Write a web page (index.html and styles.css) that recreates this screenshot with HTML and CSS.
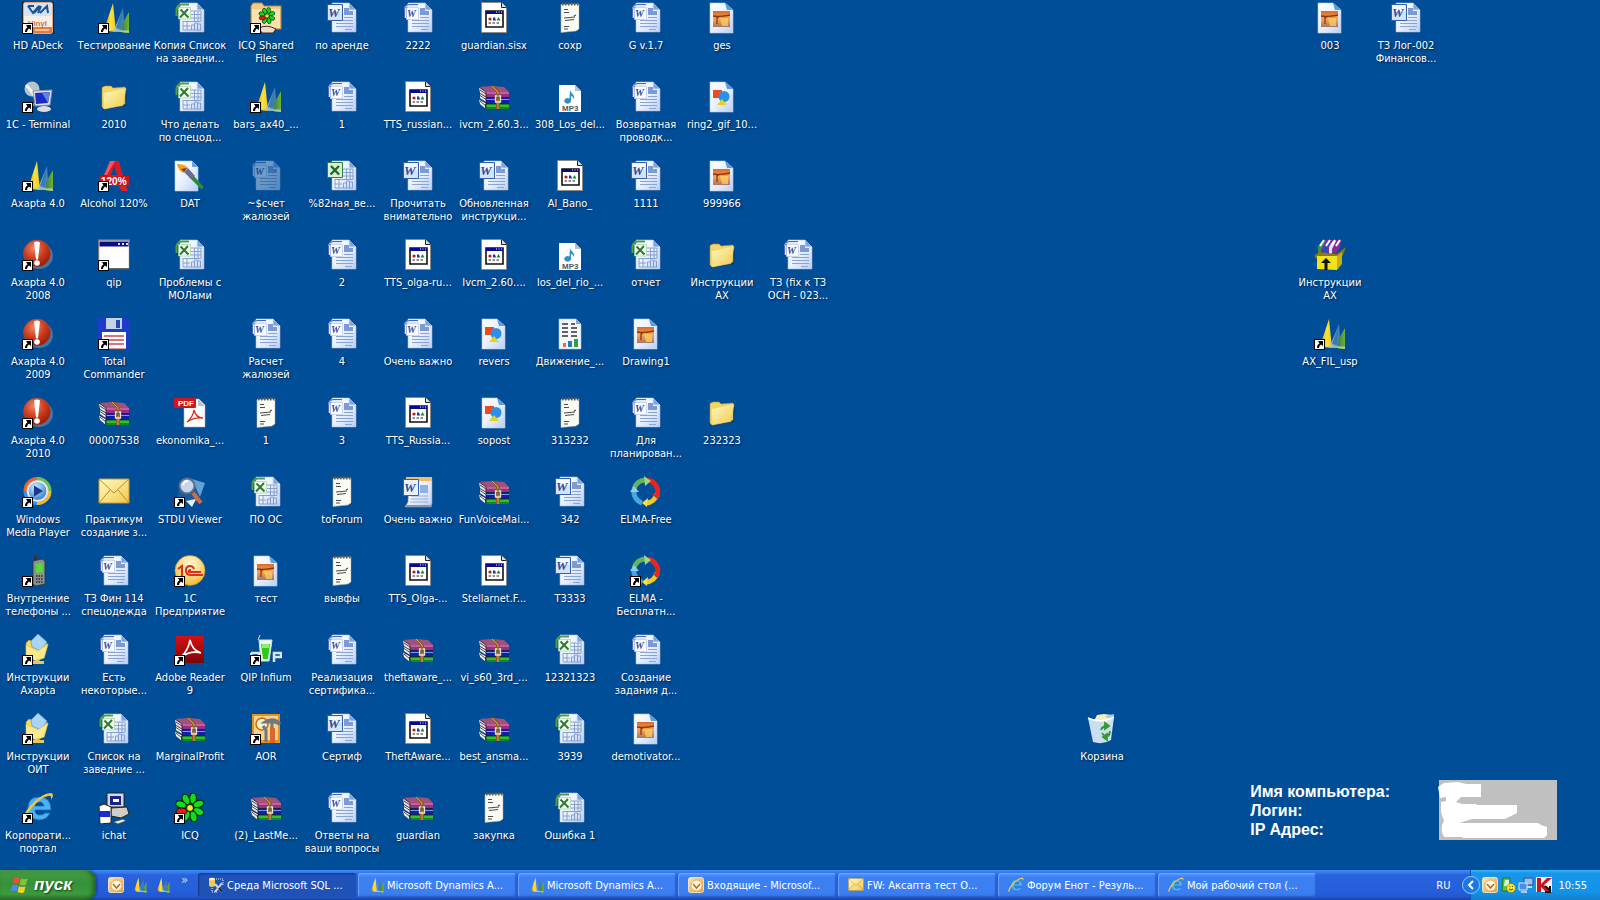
FILE: index.html
```html
<!DOCTYPE html>
<html lang="ru">
<head>
    <meta charset="UTF-8">
    <meta name="viewport" content="width=device-width, initial-scale=1.0">
    <title>Рабочий стол</title>
    <link rel="stylesheet" href="styles.css">
</head>
<body>
    <!-- Icon set -->
    <svg class="sprites" aria-hidden="true">
        <defs>
            <linearGradient id="g-page" x1="0" y1="0" x2="1" y2="1"><stop offset="0" stop-color="#fff"/><stop offset=".5" stop-color="#eaf1fd"/><stop offset="1" stop-color="#b9cff5"/></linearGradient>
            <linearGradient id="g-image" x1="0" y1="0" x2="0" y2="1"><stop offset="0" stop-color="#d9682c"/><stop offset=".5" stop-color="#f7a94e"/><stop offset="1" stop-color="#a87466"/></linearGradient>
            <linearGradient id="g-folder" x1="0" y1="0" x2="1" y2="1"><stop offset="0" stop-color="#fffbc2"/><stop offset="1" stop-color="#f0c94e"/></linearGradient>
            <linearGradient id="g-yellow" x1="0" y1="0" x2="1" y2="0"><stop offset="0" stop-color="#f08a1c"/><stop offset=".5" stop-color="#fde13a"/><stop offset="1" stop-color="#f3c92a"/></linearGradient>
            <linearGradient id="g-blue" x1="0" y1="0" x2="1" y2="0"><stop offset="0" stop-color="#a4cdea"/><stop offset="1" stop-color="#2f6cab"/></linearGradient>
            <linearGradient id="g-green" x1="0" y1="0" x2="1" y2="0"><stop offset="0" stop-color="#3f7f5a"/><stop offset="1" stop-color="#6fb52a"/></linearGradient>
            <radialGradient id="g-red" cx=".4" cy=".3" r=".75"><stop offset="0" stop-color="#f08a6a"/><stop offset=".5" stop-color="#cf3e1f"/><stop offset="1" stop-color="#8c1a08"/></radialGradient>
            <radialGradient id="g-gold" cx=".5" cy=".3" r=".8"><stop offset="0" stop-color="#fffbe0"/><stop offset="1" stop-color="#f3b21c"/></radialGradient>
            <radialGradient id="g-sky" cx=".4" cy=".3" r=".8"><stop offset="0" stop-color="#cfeaff"/><stop offset="1" stop-color="#1c74c8"/></radialGradient>
            <linearGradient id="g-adobe" x1="0" y1="0" x2="0" y2="1"><stop offset="0" stop-color="#d80f12"/><stop offset="1" stop-color="#7c0507"/></linearGradient>
            <linearGradient id="g-outlook" x1="0" y1="0" x2="1" y2="1"><stop offset="0" stop-color="#ffe3a8"/><stop offset="1" stop-color="#e89a3c"/></linearGradient>
        </defs>

        <symbol id="shortcut" viewBox="0 0 32 32">
            <path d="M0 21h11v11H0z" fill="#000"/><path d="M1 22h9v9H1z" fill="#fff"/>
            <path d="M4 23h5v5l-2-1.500-1.500 1.500-.5 2H3c0-2 .5-3.500 2.500-4.500z" fill="#000"/>
        </symbol>

        <symbol id="page" viewBox="0 0 32 32">
            <path d="M7 2h17l7 7v22H7z" fill="#022f63" opacity=".35"/>
            <path d="M6 1h17l7 7v22H6z" fill="url(#g-page)" stroke="#a9bfe6" stroke-width=".6"/>
            <path d="M23 1v7h7z" fill="#7fa5dc"/><path d="M23 1v7h7" fill="none" stroke="#dbe8fb" stroke-width=".8"/>
        </symbol>
        <symbol id="doc" viewBox="0 0 32 32">
            <use href="#page"/>
            <path d="M18 6h5v3h4v4h-9z" fill="#7d9bd2"/>
            <path d="M18 15.500h9M10 18.500h17M10 21.500h17M10 24.500h17M19 27.500h7" stroke="#8aa4d4" stroke-width="1"/>
        </symbol>
        <symbol id="sheet" viewBox="0 0 32 32">
            <use href="#page"/>
            <path d="M17 9h10v10M17 12.500h10M17 16h10M9 19.500h18M20.500 9v11M24 9v11M9 19v9M13 19v9M9 24h7M9 28h18M17.500 28v-5h3v5M20.500 28v-7h3v7M23.500 28v-6h3v6" fill="none" stroke="#7e9acb" stroke-width=".9"/>
        </symbol>
        <symbol id="word" viewBox="0 0 32 32">
            <use href="#doc"/>
            <path d="M16 2H7Q2 3 2 8v8h2V5h12z" fill="#dfe8f8"/>
            <path d="M16 2.500H7Q2.500 4 2.500 8v8" fill="none" stroke="#4a68b4"/>
            <path d="M4.500 5.500h12v12h-12z" fill="#fafcff" stroke="#b9c8e6" stroke-width=".7"/>
        </symbol>
        <symbol id="word-old" viewBox="0 0 32 32">
            <use href="#doc"/>
            <path d="M1.500 2.500h15v16h-15z" fill="#d4e2fa" stroke="#3360ae"/>
            <path d="M2.500 3.500h13v6h-13z" fill="#f4f8ff"/>
        </symbol>
        <symbol id="word-template" viewBox="0 0 32 32">
            <path d="M7 3h23v24l-1 4H3l3-5z" fill="url(#g-page)" stroke="#8d99a8" stroke-width=".6"/>
            <path d="M4 1h26v4H4z" fill="#f3bb68"/><path d="M3 29h26l1 2H4z" fill="#8a95a5"/>
            <path d="M18 9h8v8h-8z" fill="#8fb0e2"/><path d="M9 20h17M9 23h17M8 26h18" stroke="#9aaed2"/>
            <path d="M1.500 3.500h15v16h-15z" fill="#eaf1fd" stroke="#3360ae"/>
        </symbol>
        <symbol id="excel" viewBox="0 0 32 32">
            <use href="#sheet"/>
            <path d="M15 2.500H7Q2.500 4 2.500 8v6" fill="none" stroke="#4e9e4a" stroke-width="2"/>
            <path d="M4.500 5.500h12v11.500h-12z" fill="#f3fbf2" stroke="#a5cfa2" stroke-width=".7"/>
            <path d="M6.500 7.500l8 8M14 7L6 15.500" stroke="#2e7a34" stroke-width="2"/>
        </symbol>
        <symbol id="excel-old" viewBox="0 0 32 32">
            <use href="#sheet"/>
            <path d="M1.500 2.500h15v15h-15z" fill="#d9f0d6" stroke="#35803a"/>
            <path d="M5 6l8 8.500M13 6l-8.500 8.500" stroke="#1f6b27" stroke-width="2.400"/>
        </symbol>
        <symbol id="picture" viewBox="0 0 32 32">
            <path d="M4 1h15l8 7v23H4z" fill="url(#g-page)" stroke="#b5c9ea" stroke-width=".6"/>
            <path d="M19 1l8 7h-6z" fill="#5b9be0"/>
            <path d="M7 9h17v16H7z" fill="url(#g-image)"/><path d="M14 16h8v8h-6z" fill="#fbd465" opacity=".7"/>
            <path d="M7 14q8 1 17-1M11 14v8M11 16l3-2" fill="none" stroke="#8f3414" stroke-width="1.300"/>
        </symbol>
        <symbol id="shapes" viewBox="0 0 32 32">
            <path d="M4 1h15l8 7v23H4z" fill="url(#g-page)" stroke="#b5c9ea" stroke-width=".6"/>
            <path d="M19 1l8 7h-6z" fill="#5b9be0"/>
            <path d="M7 9h9v8H7z" fill="#f04a1c"/><circle cx="18" cy="15.500" r="5.500" fill="#2b90e8"/><path d="M16 18l5 6H11z" fill="#e6d21e"/>
        </symbol>
        <symbol id="note" viewBox="0 0 32 32">
            <path d="M8 3h18v25l-17 3z" fill="#02284f" opacity=".5"/>
            <path d="M7 2.500l18-.5v25l-3 2L7 30.500z" fill="#fbfbf6" stroke="#b3b3a4" stroke-width=".6"/>
            <path d="M8 2h17" stroke="#6a5c40" stroke-width="3" stroke-dasharray="1.500 1.500"/>
            <path d="M10 7.500h4M10 10.500h5M10 16l11-1M11 18.500l9-1M10 24.500h5M10 27h4M20 14l2-1" stroke="#4b4b4b" stroke-width="1.100"/>
        </symbol>
        <symbol id="program" viewBox="0 0 32 32">
            <path d="M3.500.5h20l5 5v25h-25z" fill="#fff" stroke="#8a8a8a"/><path d="M23.500.5v5h5" fill="#ddd" stroke="#222"/>
            <path d="M8 9h17v16H8z" fill="#fff" stroke="#111" stroke-width="1.600"/><path d="M8 9h17v3H8z" fill="#0a0a90"/>
            <path d="M18 10h1M20.500 10h1M23 10h1" stroke="#fff"/>
            <circle cx="12" cy="17" r="1.600" fill="#c01818"/><path d="M15 15.500h2l1 3h-3z" fill="#1c2cc8"/><path d="M20.500 15l2 3.500h-4z" fill="#168a28"/>
            <path d="M10.500 21h12" stroke="#222" stroke-dasharray="2.500 1.500"/>
        </symbol>
        <symbol id="rar" viewBox="0 0 32 32">
            <path d="M1 6l13-1 12 1 5 5H8z" fill="#a3507a"/><path d="M1 6l7 5v5l-6-4z" fill="#e9dfe6"/><path d="M8 11h23v5H8z" fill="#9a2f80"/><path d="M8 12h23" stroke="#e48fc8"/>
            <path d="M2 12l6 4v5l-6-4z" fill="#f2f2f2"/><path d="M8 17h23v5H8z" fill="#1420a4"/><path d="M8 18.500h23" stroke="#6a9cf8"/>
            <path d="M1 18l7 4v6l-6-5z" fill="#f2f2f2"/><path d="M7 23h24v5H7z" fill="#0f8a1e"/><path d="M8 25h23" stroke="#5ef048"/>
            <path d="M1 6l7 5v17M1 12l7 4M1 18l7 4M8 16.500h23M8 22.500h23M2 9l6 4M2 14.500l6 4M2 20l6 5" fill="none" stroke="#1b1b2c" stroke-width=".8"/>
            <path d="M13 5h4l5 6v17h-4V11z" fill="#8f5a26"/><path d="M14 5l6 6v17" fill="none" stroke="#d8a25c"/>
            <path d="M17.500 15h5v6h-5z" fill="none" stroke="#ece3c6" stroke-width="1.300"/><path d="M20 13v6" stroke="#444"/>
        </symbol>
        <symbol id="mp3" viewBox="0 0 32 32">
            <path d="M5 4h16l6 6v21H5z" fill="#fff"/><path d="M21 4v6h6z" fill="#b7c2cc"/>
            <path d="M16 9c1 4 5 4 4 9-1-2-2-3-3-3v5a3.400 2.800 0 1 1-1.500-2.500z" fill="#2e8fc8"/>
        </symbol>
        <symbol id="report" viewBox="0 0 32 32">
            <path d="M5 1h17l5 5v25H5z" fill="#f4f6fb" stroke="#b3bfd6" stroke-width=".6"/><path d="M22 1v5h5z" fill="#8fa3c4"/>
            <path d="M8 6h6M8 10h6M8 14h6M8 18h6M17 6h4M17 10h6M17 14h6M17 18h6" stroke="#333" stroke-width="1.600"/>
            <path d="M9 25h3v4H9z" fill="#f06a3c"/><path d="M14 23h4v6h-4z" fill="#2476c8"/><path d="M20 21h4v8h-4z" fill="#2ea04a"/>
        </symbol>
        <symbol id="folder" viewBox="0 0 32 32">
            <path d="M5 29l23-4 1-15-2 1z" fill="#02284f" opacity=".5"/>
            <path d="M4 6.500l3-1.500 6 0 2 2 12-1v17L6 28 4 26z" fill="#f3d568" stroke="#b88f2c" stroke-width=".6"/>
            <path d="M5 12l22-5 1 .5-3 17L6 28z" fill="url(#g-folder)" stroke="#e9c95a" stroke-width=".5"/>
        </symbol>
        <symbol id="sails" viewBox="0 0 32 32">
            <path d="M15 1L7 25l3 4 8 1z" fill="url(#g-yellow)"/>
            <path d="M25 6l-9 22 3 2h8z" fill="url(#g-blue)"/><path d="M25 6l-7 20 5 1z" fill="#3a78b8"/>
            <path d="M31 10l-7 12v9h7z" fill="url(#g-green)"/>
            <path d="M10 28l21 .5V31z" fill="#a9c9a4"/>
        </symbol>
        <symbol id="alert" viewBox="0 0 32 32">
            <ellipse cx="17" cy="17" rx="14" ry="13" fill="#8c9cb8" opacity=".5"/><circle cx="15" cy="14.500" r="13.500" fill="url(#g-red)" stroke="#a84f3c" stroke-width=".6"/>
            <path d="M12 3.500q3-2 6 0l-2 17h-2z" fill="#fff"/><circle cx="15" cy="24" r="2.800" fill="#fff"/>
        </symbol>
        <symbol id="adeck" viewBox="0 0 32 32">
            <path d="M0 0h32v32H0z" fill="#222"/><rect x="1.500" y=".5" width="29" height="31" rx="2" fill="#f4efe8" stroke="#e7a57c"/>
            <path d="M2 25h28v6H2z" fill="#ea7a3a"/><path d="M2 1h28v13H2z" fill="#d5e4f4"/>
            <path d="M6 4l5 7 6-7M12 11l6-7M19 4l-3 7M18 11l7-7 1 7M6 4h6" fill="none" stroke="#17529c" stroke-width="2"/>
            <path d="M13 28h14" stroke="#ffd9b4" stroke-width="1.500"/>
        </symbol>
        <symbol id="terminal" viewBox="0 0 32 32">
            <circle cx="10" cy="8" r="7.500" fill="#b9c3ca"/><path d="M4 4q6 6 8 11" stroke="#eef3f5" stroke-width="3" fill="none"/>
            <path d="M11 10l19-1-2 15-15 1z" fill="#dfe3ea" stroke="#8790a0"/><path d="M13 12l15-1-2 11-12 1z" fill="#1a2cc4"/><path d="M20 12l8-1-2 11z" fill="#5b84e8"/>
            <ellipse cx="22" cy="28" rx="7" ry="3" fill="#d9dce2"/><path d="M12 22l-2 5" stroke="#9aa"/>
        </symbol>
        <symbol id="alcohol" viewBox="0 0 32 32">
            <path d="M12 1h9l8 29h-7l-2-7h-8l-7 6z" fill="#d41c24"/><path d="M16 6l3 9h-6z" fill="#004e98"/><path d="M12 1h5L9 15H6z" fill="#ee5a60"/>
            <path d="M1 16h30v10H1z" fill="#c9151f"/><path d="M23 26h5l2 5h-6z" fill="#e02028"/>
        </symbol>
        <symbol id="window" viewBox="0 0 32 32">
            <path d="M.500 1h31v29H.5z" fill="#fff" stroke="#77797d" stroke-width="1.400"/><path d="M1.500 2.500h29v5h-29z" fill="#0b0b8e"/>
            <path d="M20 4h2v2h-2zM24 4h2v2h-2zM28 4h2v2h-2z" fill="#e4e4e4"/><path d="M2 30h30V3" fill="none" stroke="#333"/>
        </symbol>
        <symbol id="floppy" viewBox="0 0 32 32">
            <path d="M0 0h32v32H2l-2-2z" fill="#1d3ccc"/><path d="M8 0h16v11H8z" fill="#c4d2e4"/><path d="M18 2h4v8h-4z" fill="#2447b8"/>
            <path d="M4 14h24v17H4z" fill="#fff"/><path d="M6 18h20M6 22h20M6 26h20" stroke="#c84a54" stroke-width="1.300"/><path d="M4 31h24" stroke="#c0262c"/>
        </symbol>
        <symbol id="mail" viewBox="0 0 32 32">
            <path d="M1 3h30v24H1z" fill="url(#g-folder)" stroke="#c79432"/><path d="M1 3l15 14L31 3M1 27l11-13M31 27L20 14" fill="none" stroke="#c08a2c"/>
        </symbol>
        <symbol id="brush" viewBox="0 0 32 32">
            <path d="M1 1h17l6 6v24H1z" fill="url(#g-page)" stroke="#b5c9ea" stroke-width=".6"/><path d="M18 1l6 6h-6z" fill="#6d9fd8"/>
            <path d="M15 17l3-3 11 12q1 3-2 3z" fill="#2e8a34"/><path d="M10 12l4-4 7 8-4 3z" fill="#6c6c9a"/><path d="M3 4q8 0 11 4l-5 5Q4 10 3 4z" fill="#f0a024"/><path d="M7 9l6-1-3 4z" fill="#7c3c08"/>
        </symbol>
        <symbol id="pdf" viewBox="0 0 32 32">
            <path d="M10 2h15l6 6v22H10z" fill="#fff" stroke="#aab" stroke-width=".6"/><path d="M24 2v7h7z" fill="#b9c3cf"/>
            <path d="M13 25q6-5 7-12 2 8 9 8-9-1-16 4z" fill="none" stroke="#e0261f" stroke-width="1.300"/>
            <rect y="1" width="22" height="10" rx="1" fill="#d3141c"/>
        </symbol>
        <symbol id="loupe" viewBox="0 0 32 32">
            <path d="M8 5l23 2-9 20-20-4z" fill="#1d5c9a"/><path d="M18 3l13 4-5 14z" fill="#5fa3d8"/><path d="M12 25l6 6 4-8z" fill="#e8f1fa"/>
            <path d="M19 17l8 10" stroke="#d8693a" stroke-width="4"/><circle cx="13" cy="10" r="7.500" fill="#c8d6ea" stroke="#5c6e8c" stroke-width="2"/><path d="M9 9q1-4 5-4" stroke="#fff" stroke-width="2" fill="none"/>
        </symbol>
        <symbol id="onec" viewBox="0 0 32 32">
            <circle cx="16" cy="15.500" r="15" fill="url(#g-gold)" stroke="#d88f14" stroke-width=".6"/>
            <path d="M4 14l4-3v10M20 14q-1-3-4-3-4 0-4 4.500t5 4.500h12M17 15q-3 0-2 2h12" fill="none" stroke="#d6321c" stroke-width="2"/>
        </symbol>
        <symbol id="reader" viewBox="0 0 32 32">
            <path d="M2 2h28v27H2z" fill="url(#g-adobe)"/><path d="M7 23q7-6 9-17 2 10 11 13-10-3-20 4z" fill="none" stroke="#fff" stroke-width="1.600"/>
        </symbol>
        <symbol id="flower" viewBox="0 0 32 32">
            <g fill="#12dc1c" stroke="#062c06" stroke-width="1.200">
                <ellipse cx="19" cy="6.500" rx="3.500" ry="5.500"/><ellipse cx="12" cy="7.500" rx="3.500" ry="5.500" transform="rotate(-25 12 7.500)"/>
                <ellipse cx="24.500" cy="12" rx="5.500" ry="3.500" transform="rotate(-20 24.500 12)"/><ellipse cx="24.500" cy="19.500" rx="5.500" ry="3.500" transform="rotate(25 24.500 19.500)"/>
                <ellipse cx="19.500" cy="24.500" rx="3.500" ry="5.500" transform="rotate(-15 19.500 24.500)"/><ellipse cx="12" cy="24" rx="3.500" ry="5.500" transform="rotate(25 12 24)"/>
                <ellipse cx="7" cy="12.500" rx="5.500" ry="3.500" transform="rotate(20 7 12.500)"/>
            </g>
            <ellipse cx="7.500" cy="19.500" rx="5.500" ry="3.500" fill="#e01c1c" stroke="#2a0606"/><circle cx="16" cy="16" r="3.500" fill="#f6ec2a" stroke="#111"/>
        </symbol>
        <symbol id="flower-folder" viewBox="0 0 32 32">
            <path d="M1 4l2-3h9l2 3h17v23H1z" fill="#f3cc84" stroke="#b98a3e"/><path d="M2 7h28v19H2z" fill="#fbe2ae"/>
            <svg x="8" y="5" width="18" height="18" viewBox="0 0 32 32"><use href="#flower"/></svg>
            <path d="M9 26q8-4 17 1l-3 4H12z" fill="#f2d9c4" stroke="#422"/>
        </symbol>
        <symbol id="player" viewBox="0 0 32 32">
            <circle cx="15.500" cy="15" r="13.500" fill="#cfd8e6"/>
            <g fill="none" stroke-width="3"><path d="M3 15A12.500 12.500 0 0 1 15 2.500" stroke="#f0622a"/><path d="M15 2.500A12.500 12.500 0 0 1 28 15" stroke="#6fc04a"/><path d="M28 15a12.500 12.500 0 0 1-13 12.500" stroke="#f3b62a"/><path d="M15 27.500A12.500 12.500 0 0 1 3 15" stroke="#3f8be0"/></g>
            <circle cx="15.500" cy="15" r="9.500" fill="url(#g-sky)" stroke="#fff"/><path d="M12 9.500l9 5.500-9 5.500z" fill="#163a8c"/>
        </symbol>
        <symbol id="phone" viewBox="0 0 32 32">
            <path d="M12 1h3v7h-3z" fill="#333"/><path d="M11 6l9-2 3 2v23l-9 2-3-2z" fill="#8c9090" stroke="#2d3030" stroke-width=".8"/>
            <path d="M14 9l7-1v9l-7 1z" fill="#58d83a"/><path d="M14 21h7M14 24h7M14 27h7" stroke="#2b2b2b" stroke-width="1.600" stroke-dasharray="1.500 1"/>
        </symbol>
        <symbol id="netfolder" viewBox="0 0 32 32">
            <path d="M4 9l3-3 5 2 14 2-4 14H5z" fill="#f6d868" stroke="#c09a30" stroke-width=".7"/><path d="M9 7l7-7 9 8-6 9-9-4z" fill="#a9d4f4" stroke="#5f98c8" stroke-width=".7"/>
            <path d="M4 11l12 6 10-7-4 14-8 3-10-4z" fill="#fbe98e" stroke="#d9b84c" stroke-width=".5"/><path d="M16 25v3M11 28.500h11" stroke="#e4c95c" stroke-width="3"/>
        </symbol>
        <symbol id="qip" viewBox="0 0 32 32">
            <path d="M8 6l2-5M9 6h13l-3 21h-8z" fill="#eef6ee" stroke="#d5e2d8"/><path d="M11 10h9l-2 15h-5z" fill="#2fc81f"/><path d="M12 10h7v4h-7z" fill="#8cf06a"/>
            <path d="M1 19v10M1 19h8v4M24 28v-9h7v4h-7" fill="none" stroke="#dce6ee" stroke-width="2.500"/>
        </symbol>
        <symbol id="tools" viewBox="0 0 32 32">
            <path d="M2 1h28v29H2z" fill="#e88f1e"/><path d="M4 3h24v24H4z" fill="#fbd48a"/><circle cx="12" cy="11" r="6" fill="#fff0cc" stroke="#c96a10" stroke-width="1.500"/>
            <path d="M16 29V17l-3-4M22 15V9M15 9q6-4 12-1l3 3-5-2h-9z" fill="none" stroke="#707880" stroke-width="3"/><path d="M20 14l5 1v15h-5z" fill="#d9652f"/>
        </symbol>
        <symbol id="explorer" viewBox="0 0 32 32">
            <path d="M29 18H13q0 5 5 5 3 0 5-2h5q-3 7-11 7Q6 27 6 16T17 5q12 0 12 13zM13 14h9q-1-4-4-4-4 0-5 4z" fill="#4ab2f4" stroke="#1668b8" stroke-width=".8"/>
            <path d="M1 30Q-1 25 8 14 20 1 29 1q4 1 0 7 1-5-3-4Q17 6 9 17 3 25 3 29z" fill="#f0c548"/>
        </symbol>
        <symbol id="setup" viewBox="0 0 32 32">
            <path d="M9 1h17v14H9z" fill="#d8d8d0" stroke="#222"/><path d="M12 4h11v9H12z" fill="#1a2290"/><path d="M15 7h6v3h-6z" fill="#fff"/>
            <path d="M13 16l16-1 2 7-8 4-10-2z" fill="#cfcfc6" stroke="#222"/><path d="M15 30l10-3 3 2-8 3z" fill="#e5e5da" stroke="#333" stroke-width=".6"/>
            <path d="M1 14l5-2 7 3v16l-11 1z" fill="#fff" stroke="#222"/><path d="M2 19l10 0v6H2z" fill="#1c2cd0"/>
        </symbol>
        <symbol id="elma" viewBox="0 0 32 32">
            <g fill="none" stroke-width="5"><path d="M4 13A12 12 0 0 1 15 4" stroke="#64b45c"/><path d="M18 4a12 12 0 0 1 9 16" stroke="#e8251c"/><path d="M27 18a12 12 0 0 1-11 9" stroke="#f6c81e"/><path d="M12 27A12 12 0 0 1 4 14" stroke="#4aa6e0"/></g>
            <path d="M14 0l7 5-6 5z" fill="#a4d48c"/><path d="M0 16l4-6 5 6z" fill="#8accf2"/><path d="M17 31l-5-4 6-5z" fill="#fade4a"/><path d="M30 18l-3 5-5-5z" fill="#e8251c"/>
        </symbol>
        <symbol id="box" viewBox="0 0 32 32">
            <path d="M4 12L9 1h18l-1 8-4 5z" fill="#8c2a94"/><path d="M4 8l3-5h4l-4 8v5H4z" fill="#2a9a4c"/><path d="M9 8l4-6h4l-4 8v5H9z" fill="#2c48c8"/><path d="M15 8l4-6h3l-4 8v5h-3z" fill="#e4e4ee"/>
            <path d="M6 7l4-6M12 7l4-6M17 7l4-6M22 7l4-6" stroke="#fff" stroke-width="2"/>
            <path d="M0 17l5-4 18 2 9-7-3 8-4 4H3z" fill="#8a7a10"/><path d="M3 17h20v14l-20-1z" fill="#f2e21c"/><path d="M23 17l5-4v12l-5 6z" fill="#c2b010"/>
            <path d="M12 19l5 5h-3.500v7h-3v-7H7z" fill="#111"/>
        </symbol>
        <symbol id="bin" viewBox="0 0 32 32">
            <path d="M8 8l3-6 7-1 8 1-1 8z" fill="#f8edba"/><path d="M19 3l9-2-1 8z" fill="#9ecaf4"/><path d="M2 5q12 6 26-1l-3 23q-8 5-18 2z" fill="#d5e6f6" opacity=".95"/><path d="M2 5q12 6 26-1" fill="none" stroke="#fff" stroke-width="1.400"/>
            <path d="M15 17q1-4 6-4M19 10l4 3-4 3zM24 18q0 5-4 6M16 20l3 4M21 21l-4 3 4 3z" fill="#2f9e2c" stroke="#2f9e2c" stroke-width="1.800"/>
        </symbol>
        <symbol id="outlook" viewBox="0 0 16 16">
            <rect x=".5" y=".5" width="15" height="15" rx="2" fill="url(#g-outlook)" stroke="#fff0cc" stroke-width=".8"/>
            <circle cx="8.500" cy="8.500" r="5.500" fill="#fff8e4" stroke="#d9a04c" stroke-width=".8"/><path d="M5 7l3.500 4L12 7" fill="none" stroke="#b06c14" stroke-width="1.500"/>
        </symbol>
        <symbol id="studio" viewBox="0 0 16 16">
            <path d="M1 2q3-2 6 0v7q-3 2-6 0z" fill="#f2cb4c"/><ellipse cx="4" cy="2" rx="3" ry="1.200" fill="#fff3b4"/>
            <path d="M8 2h7v7M4 11v4h5" fill="none" stroke="#e9f2ff" stroke-dasharray="1 1"/><path d="M7 7l7 8M14 6l-7 9" stroke="#cdd6df" stroke-width="2"/><path d="M11 11l3 4" stroke="#222" stroke-width="2"/>
        </symbol>
        <symbol id="flag" viewBox="0 0 20 18">
            <path d="M4 2q3-2 6 0L8.500 8q-3-1.500-6 0z" fill="#e8522a"/><path d="M11 2.500q3 1.500 6.500 0L16 9q-3 1-6.500-.5z" fill="#7cc43c"/>
            <path d="M2 9.500q3-1.500 6 0L6.500 15.500q-3-1.500-6 0z" fill="#4a8cf0"/><path d="M9 10q3 1.500 6.500.5l-1.500 6q-3 1-6.500-.5z" fill="#f8cc2c"/>
        </symbol>
        <symbol id="agent" viewBox="0 0 16 16">
            <path d="M3 1h7v13H2z" fill="#58c83c" stroke="#1e7a18"/><path d="M5 3h4v6H4z" fill="#e4ffd8"/><circle cx="11" cy="11" r="4.500" fill="#f8e832" stroke="#8a7a10" stroke-width=".7"/><path d="M9 12q2 2 4 0M9.500 9.500h.8M12 9.500h.8" fill="none" stroke="#333"/>
        </symbol>
        <symbol id="network" viewBox="0 0 16 16">
            <path d="M6 1h9v7H6z" fill="#8fc0f8" stroke="#2a4c8c"/><path d="M9 9h5v2H9z" fill="#cdd"/><path d="M1 6h8v7H1z" fill="#4c8ce8" stroke="#d8e4f4"/><path d="M3 14h6v2H3z" fill="#b9c4d4"/>
        </symbol>
        <symbol id="kaspersky" viewBox="0 0 16 16">
            <path d="M0 0h16v15H0z" fill="#f4f4f4"/><path d="M1 1h4v6l6-6h5L8 8l6 6H9l-4-4v5H1z" fill="#c8141c"/><path d="M9 9l6 5M14 9v6H9" stroke="#111" stroke-width="2" fill="none"/>
        </symbol>
    </svg>

    <main class="desktop">
        <a class="icon" href="#"><svg><use href="#adeck"/><text x="6" y="24" class="tiny vinyl">Vinyl</text><use href="#shortcut"/></svg><span>HD ADeck</span></a>
        <a class="icon" href="#"><svg><use href="#terminal"/><use href="#shortcut"/></svg><span>1C - Terminal</span></a>
        <a class="icon" href="#"><svg><use href="#sails"/><use href="#shortcut"/></svg><span>Axapta 4.0</span></a>
        <a class="icon" href="#"><svg><use href="#alert"/><use href="#shortcut"/></svg><span>Axapta 4.0<br>2008</span></a>
        <a class="icon" href="#"><svg><use href="#alert"/><use href="#shortcut"/></svg><span>Axapta 4.0<br>2009</span></a>
        <a class="icon" href="#"><svg><use href="#alert"/><use href="#shortcut"/></svg><span>Axapta 4.0<br>2010</span></a>
        <a class="icon" href="#"><svg><use href="#player"/><use href="#shortcut"/></svg><span>Windows<br>Media Player</span></a>
        <a class="icon" href="#"><svg><use href="#phone"/><use href="#shortcut"/></svg><span>Внутренние<br>телефоны ...</span></a>
        <a class="icon" href="#"><svg><use href="#netfolder"/><use href="#shortcut"/></svg><span>Инструкции<br>Axapta</span></a>
        <a class="icon" href="#"><svg><use href="#netfolder"/><use href="#shortcut"/></svg><span>Инструкции<br>ОИТ</span></a>
        <a class="icon" href="#"><svg><use href="#explorer"/><use href="#shortcut"/></svg><span>Корпорати...<br>портал</span></a>

        <a class="icon" href="#"><svg><use href="#sails"/><use href="#shortcut"/></svg><span>Тестирование</span></a>
        <a class="icon" href="#"><svg><use href="#folder"/></svg><span>2010</span></a>
        <a class="icon" href="#"><svg><use href="#alcohol"/><text x="3" y="25" class="tiny percent">120%</text><use href="#shortcut"/></svg><span>Alcohol 120%</span></a>
        <a class="icon" href="#"><svg><use href="#window"/><use href="#shortcut"/></svg><span>qip</span></a>
        <a class="icon" href="#"><svg><use href="#floppy"/><use href="#shortcut"/></svg><span>Total<br>Commander</span></a>
        <a class="icon" href="#"><svg><use href="#rar"/></svg><span>00007538</span></a>
        <a class="icon" href="#"><svg><use href="#mail"/></svg><span>Практикум<br>создание з...</span></a>
        <a class="icon" href="#"><svg><use href="#word"/><text x="5" y="15" class="mark mark-s">W</text></svg><span>ТЗ Фин 114<br>спецодежда</span></a>
        <a class="icon" href="#"><svg><use href="#word"/><text x="5" y="15" class="mark mark-s">W</text></svg><span>Есть<br>некоторые...</span></a>
        <a class="icon" href="#"><svg><use href="#excel"/></svg><span>Список на<br>заведние ...</span></a>
        <a class="icon" href="#"><svg><use href="#setup"/></svg><span>ichat</span></a>

        <a class="icon" href="#"><svg><use href="#excel"/></svg><span>Копия Список<br>на заведни...</span></a>
        <a class="icon" href="#"><svg><use href="#excel"/></svg><span>Что делать<br>по спецод...</span></a>
        <a class="icon" href="#"><svg><use href="#brush"/></svg><span>DAT</span></a>
        <a class="icon" href="#"><svg><use href="#excel"/></svg><span>Проблемы с<br>МОЛами</span></a>
        <a class="icon row-6" href="#"><svg><use href="#pdf"/><text x="4" y="9" class="tiny pdf">PDF</text></svg><span>ekonomika_...</span></a>
        <a class="icon" href="#"><svg><use href="#loupe"/><use href="#shortcut"/></svg><span>STDU Viewer</span></a>
        <a class="icon" href="#"><svg><use href="#onec"/><use href="#shortcut"/></svg><span>1С<br>Предприятие</span></a>
        <a class="icon" href="#"><svg><use href="#reader"/><use href="#shortcut"/></svg><span>Adobe Reader<br>9</span></a>
        <a class="icon" href="#"><svg><use href="#rar"/></svg><span>MarginalProfit</span></a>
        <a class="icon" href="#"><svg><use href="#flower"/><use href="#shortcut"/></svg><span>ICQ</span></a>

        <a class="icon" href="#"><svg><use href="#flower-folder"/><use href="#shortcut"/></svg><span>ICQ Shared<br>Files</span></a>
        <a class="icon" href="#"><svg><use href="#sails"/><use href="#shortcut"/></svg><span>bars_ax40_...</span></a>
        <a class="icon hidden-file" href="#"><svg><use href="#word"/><text x="5" y="15" class="mark mark-s">W</text></svg><span>~$счет<br>жалюзей</span></a>
        <a class="icon row-5" href="#"><svg><use href="#word"/><text x="5" y="15" class="mark mark-s">W</text></svg><span>Расчет<br>жалюзей</span></a>
        <a class="icon" href="#"><svg><use href="#note"/></svg><span>1</span></a>
        <a class="icon" href="#"><svg><use href="#excel"/></svg><span>ПО ОС</span></a>
        <a class="icon" href="#"><svg><use href="#picture"/></svg><span>тест</span></a>
        <a class="icon" href="#"><svg><use href="#qip"/><use href="#shortcut"/></svg><span>QIP Infium</span></a>
        <a class="icon" href="#"><svg><use href="#tools"/><use href="#shortcut"/></svg><span>AOR</span></a>
        <a class="icon" href="#"><svg><use href="#rar"/></svg><span>(2)_LastMe...</span></a>

        <a class="icon" href="#"><svg><use href="#word-old"/><text x="2" y="15" class="mark">W</text></svg><span>по аренде</span></a>
        <a class="icon" href="#"><svg><use href="#word"/><text x="5" y="15" class="mark mark-s">W</text></svg><span>1</span></a>
        <a class="icon" href="#"><svg><use href="#excel-old"/></svg><span>%82ная_ве...</span></a>
        <a class="icon" href="#"><svg><use href="#word"/><text x="5" y="15" class="mark mark-s">W</text></svg><span>2</span></a>
        <a class="icon" href="#"><svg><use href="#word"/><text x="5" y="15" class="mark mark-s">W</text></svg><span>4</span></a>
        <a class="icon" href="#"><svg><use href="#word"/><text x="5" y="15" class="mark mark-s">W</text></svg><span>3</span></a>
        <a class="icon" href="#"><svg><use href="#note"/></svg><span>toForum</span></a>
        <a class="icon" href="#"><svg><use href="#note"/></svg><span>вывфы</span></a>
        <a class="icon" href="#"><svg><use href="#word"/><text x="5" y="15" class="mark mark-s">W</text></svg><span>Реализация<br>сертифика...</span></a>
        <a class="icon" href="#"><svg><use href="#word-old"/><text x="2" y="15" class="mark">W</text></svg><span>Сертиф</span></a>
        <a class="icon" href="#"><svg><use href="#word"/><text x="5" y="15" class="mark mark-s">W</text></svg><span>Ответы на<br>ваши вопросы</span></a>

        <a class="icon" href="#"><svg><use href="#word"/><text x="5" y="15" class="mark mark-s">W</text></svg><span>2222</span></a>
        <a class="icon" href="#"><svg><use href="#program"/></svg><span>TTS_russian...</span></a>
        <a class="icon" href="#"><svg><use href="#word-old"/><text x="2" y="15" class="mark">W</text></svg><span>Прочитать<br>внимательно</span></a>
        <a class="icon" href="#"><svg><use href="#program"/></svg><span>TTS_olga-ru...</span></a>
        <a class="icon" href="#"><svg><use href="#word"/><text x="5" y="15" class="mark mark-s">W</text></svg><span>Очень важно</span></a>
        <a class="icon" href="#"><svg><use href="#program"/></svg><span>TTS_Russia...</span></a>
        <a class="icon" href="#"><svg><use href="#word-template"/><text x="2" y="16" class="mark">W</text></svg><span>Очень важно</span></a>
        <a class="icon" href="#"><svg><use href="#program"/></svg><span>TTS_Olga-...</span></a>
        <a class="icon" href="#"><svg><use href="#rar"/></svg><span>theftaware_...</span></a>
        <a class="icon" href="#"><svg><use href="#program"/></svg><span>TheftAware...</span></a>
        <a class="icon" href="#"><svg><use href="#rar"/></svg><span>guardian</span></a>

        <a class="icon" href="#"><svg><use href="#program"/></svg><span>guardian.sisx</span></a>
        <a class="icon" href="#"><svg><use href="#rar"/></svg><span>ivcm_2.60.3...</span></a>
        <a class="icon" href="#"><svg><use href="#word-old"/><text x="2" y="15" class="mark">W</text></svg><span>Обновленная<br>инструкци...</span></a>
        <a class="icon" href="#"><svg><use href="#program"/></svg><span>Ivcm_2.60....</span></a>
        <a class="icon" href="#"><svg><use href="#shapes"/></svg><span>revers</span></a>
        <a class="icon" href="#"><svg><use href="#shapes"/></svg><span>sopost</span></a>
        <a class="icon" href="#"><svg><use href="#rar"/></svg><span>FunVoiceMai...</span></a>
        <a class="icon" href="#"><svg><use href="#program"/></svg><span>Stellarnet.F...</span></a>
        <a class="icon" href="#"><svg><use href="#rar"/></svg><span>vi_s60_3rd_...</span></a>
        <a class="icon" href="#"><svg><use href="#rar"/></svg><span>best_ansma...</span></a>
        <a class="icon" href="#"><svg><use href="#note"/></svg><span>закупка</span></a>

        <a class="icon" href="#"><svg><use href="#note"/></svg><span>сохр</span></a>
        <a class="icon" href="#"><svg><use href="#mp3"/><text x="8" y="30" class="tiny">MP3</text></svg><span>308_Los_del...</span></a>
        <a class="icon" href="#"><svg><use href="#program"/></svg><span>Al_Bano_</span></a>
        <a class="icon" href="#"><svg><use href="#mp3"/><text x="8" y="30" class="tiny">MP3</text></svg><span>los_del_rio_...</span></a>
        <a class="icon" href="#"><svg><use href="#report"/></svg><span>Движение_...</span></a>
        <a class="icon" href="#"><svg><use href="#note"/></svg><span>313232</span></a>
        <a class="icon" href="#"><svg><use href="#word-old"/><text x="2" y="15" class="mark">W</text></svg><span>342</span></a>
        <a class="icon" href="#"><svg><use href="#word-old"/><text x="2" y="15" class="mark">W</text></svg><span>T3333</span></a>
        <a class="icon" href="#"><svg><use href="#excel"/></svg><span>12321323</span></a>
        <a class="icon" href="#"><svg><use href="#excel"/></svg><span>3939</span></a>
        <a class="icon" href="#"><svg><use href="#excel"/></svg><span>Ошибка 1</span></a>

        <a class="icon" href="#"><svg><use href="#word"/><text x="5" y="15" class="mark mark-s">W</text></svg><span>G v.1.7</span></a>
        <a class="icon" href="#"><svg><use href="#word"/><text x="5" y="15" class="mark mark-s">W</text></svg><span>Возвратная<br>проводк...</span></a>
        <a class="icon" href="#"><svg><use href="#word-old"/><text x="2" y="15" class="mark">W</text></svg><span>1111</span></a>
        <a class="icon" href="#"><svg><use href="#excel"/></svg><span>отчет</span></a>
        <a class="icon" href="#"><svg><use href="#picture"/></svg><span>Drawing1</span></a>
        <a class="icon" href="#"><svg><use href="#word"/><text x="5" y="15" class="mark mark-s">W</text></svg><span>Для<br>планирован...</span></a>
        <a class="icon" href="#"><svg><use href="#elma"/></svg><span>ELMA-Free</span></a>
        <a class="icon" href="#"><svg><use href="#elma"/><use href="#shortcut"/></svg><span>ELMA -<br>Бесплатн...</span></a>
        <a class="icon" href="#"><svg><use href="#word"/><text x="5" y="15" class="mark mark-s">W</text></svg><span>Создание<br>задания д...</span></a>
        <a class="icon" href="#"><svg><use href="#picture"/></svg><span>demotivator...</span></a>

        <a class="icon row-1" href="#"><svg><use href="#picture"/></svg><span>ges</span></a>
        <a class="icon" href="#"><svg><use href="#shapes"/></svg><span>ring2_gif_10...</span></a>
        <a class="icon" href="#"><svg><use href="#picture"/></svg><span>999966</span></a>
        <a class="icon" href="#"><svg><use href="#folder"/></svg><span>Инструкции<br>АХ</span></a>
        <a class="icon row-6" href="#"><svg><use href="#folder"/></svg><span>232323</span></a>

        <a class="icon row-4" href="#"><svg><use href="#word"/><text x="5" y="15" class="mark mark-s">W</text></svg><span>ТЗ (fix к ТЗ<br>ОСН - 023...</span></a>

        <a class="icon col-15 row-10" href="#"><svg><use href="#bin"/></svg><span>Корзина</span></a>
        <a class="icon col-18 row-1" href="#"><svg><use href="#picture"/></svg><span>003</span></a>
        <a class="icon col-18 row-4" href="#"><svg><use href="#box"/></svg><span>Инструкции<br>АХ</span></a>
        <a class="icon col-18 row-5" href="#"><svg><use href="#sails"/><use href="#shortcut"/></svg><span>AX_FIL_usp</span></a>
        <a class="icon col-19 row-1" href="#"><svg><use href="#word-old"/><text x="2" y="15" class="mark">W</text></svg><span>ТЗ Лог-002<br>Финансов...</span></a>

        <!-- Computer info, values painted over -->
        <section class="info">
            <p>Имя компьютера:<br>Логин:<br>IP Адрес:</p>
            <svg class="scribble" viewBox="0 0 118 60">
                <path d="M0 0h118v60H0z" fill="#c0c0c0"/>
                <path d="M-1 7l6-4 14-1 8 2h15v13H22l-5 5 6 2h14l1 1h40v8l-12 6H33l-13 4h79l3 2 6 2v8l-3 3H24l-1-1H6q-4-2-3-12l2-4-3-9V22l5-1V17l-6 1z" fill="#fff"/>
            </svg>
        </section>
    </main>

    <footer class="taskbar">
        <button class="start"><svg><use href="#flag"/></svg>пуск</button>
        <div class="quick">
            <button aria-label="Outlook"><svg><use href="#outlook"/></svg></button>
            <button aria-label="Axapta"><svg><use href="#sails"/></svg></button>
            <button aria-label="Axapta 4.0"><svg><use href="#sails"/></svg></button>
            <button class="more">»</button>
        </div>
        <nav class="tasks">
            <button class="task active"><svg><use href="#studio"/></svg>Среда Microsoft SQL ...</button>
            <button class="task"><svg><use href="#sails"/></svg>Microsoft Dynamics A...</button>
            <button class="task"><svg><use href="#sails"/></svg>Microsoft Dynamics A...</button>
            <button class="task"><svg><use href="#outlook"/></svg>Входящие - Microsof...</button>
            <button class="task"><svg><use href="#mail"/></svg>FW: Аксапта тест О...</button>
            <button class="task"><svg><use href="#explorer"/></svg>Форум Енот - Резуль...</button>
            <button class="task"><svg><use href="#explorer"/></svg>Мой рабочий стол (...</button>
        </nav>
        <button class="lang">RU</button>
        <div class="tray">
            <button class="expand" aria-label="Показать скрытые значки"><svg viewBox="0 0 18 18"><circle cx="9" cy="9" r="8.500" fill="#1c78e0" stroke="#8cc8fa"/><path d="M11 5L7 9l4 4" fill="none" stroke="#fff" stroke-width="2"/></svg></button>
            <svg><use href="#outlook"/></svg>
            <svg><use href="#agent"/></svg>
            <svg><use href="#network"/></svg>
            <svg><use href="#kaspersky"/></svg>
            <time>10:55</time>
        </div>
    </footer>
</body>
</html>
```
FILE: styles.css
```css
* {
    box-sizing: border-box;
}
body {
    margin: 0;
    min-height: 100vh;
    display: flex;
    flex-direction: column;
    background-color: #004e98;
    color: #fff;
    font-family: "DejaVu Sans Condensed", "DejaVu Sans", sans-serif;
    font-size: 11px;
    line-height: 13px;
}
button {
    padding: 0;
    border: none;
    background: none;
    color: inherit;
    font: inherit;
}
.sprites {
    position: absolute;
    width: 0;
    height: 0;
}

/* Text inside the icons */
.icon text {
    text-shadow: none;
}
.mark {
    font: italic bold 13px "Liberation Serif", serif;
    fill: #2a4f9e;
}
.mark-s {
    font-size: 10px;
    fill: #3050a4;
}
.tiny {
    font: bold 8px "Liberation Sans", sans-serif;
    fill: #555;
}
.vinyl {
    fill: #d0743c;
}
.percent {
    font-size: 10px;
    fill: #fff;
}
.pdf {
    fill: #fff;
}

/* Desktop */
.desktop {
    position: relative;
    flex: 1;
    display: grid;
    grid-auto-flow: column;
    grid-template-rows: repeat(11, 79px);
    grid-auto-columns: 76px;
}
.icon {
    display: flex;
    flex-direction: column;
    align-items: center;
    gap: 5px;
    padding-top: 2px;
    color: #fff;
    text-align: center;
    text-decoration: none;
    text-shadow: 1px 1px 2px #001c40;
    white-space: nowrap;
}
.icon svg {
    width: 32px;
    height: 32px;
}
.hidden-file svg {
    opacity: 0.45;
}
.row-1 { grid-row: 1; }
.row-4 { grid-row: 4; }
.row-5 { grid-row: 5; }
.row-6 { grid-row: 6; }
.row-10 { grid-row: 10; }
.col-15 { grid-column: 15; }
.col-18 { grid-column: 18; }
.col-19 { grid-column: 19; }

.info {
    position: absolute;
    right: 43px;
    bottom: 30px;
    display: flex;
    gap: 49px;
    font: bold 16px/19px "Liberation Sans", Arial, sans-serif;
}
.info p {
    margin: 2px 0 0;
}
.scribble {
    width: 118px;
    height: 60px;
    overflow: visible;
}

/* Taskbar */
.taskbar {
    display: flex;
    align-items: stretch;
    height: 30px;
    background: linear-gradient(#3f8cf3 0, #3a7ef0 2px, #2a62dc 5px, #245edb 22px, #2258cf 27px, #1941a5 30px);
}
.start {
    display: flex;
    align-items: center;
    gap: 4px;
    width: 96px;
    padding-left: 10px;
    border-radius: 0 10px 10px 0;
    background: linear-gradient(#5fb05f 0, #3f9a40 3px, #37913a 14px, #3c9a3c 24px, #2a6f2c 30px);
    box-shadow: inset -3px 0 4px #206522, 1px 0 3px #143c8c;
    font: italic bold 17px "Liberation Sans", Arial, sans-serif;
    text-shadow: 1px 1px 2px #123c14;
}
.start svg {
    width: 20px;
    height: 18px;
}
.quick {
    display: flex;
    align-items: center;
    gap: 7px;
    width: 102px;
    padding-left: 12px;
}
.quick svg, .task svg, .tray svg {
    display: block;
    flex: none;
    width: 16px;
    height: 16px;
}
.more {
    align-self: flex-start;
    padding: 3px 0 0 4px;
    font-size: 13px;
    color: #c6dcfa;
}
.tasks {
    flex: 1;
    display: flex;
    gap: 2px;
    padding: 3px 0;
}
.task {
    display: flex;
    align-items: center;
    gap: 3px;
    flex: 0 1 158px;
    min-width: 0;
    padding-left: 10px;
    border-radius: 3px;
    background: linear-gradient(#5a9bfb, #3c81f3 4px, #3a7ef2 20px, #3474e4);
    box-shadow: inset 1px 1px 1px #6ba4fa, inset -1px -1px 1px #2b62cc;
    overflow: hidden;
    white-space: nowrap;
}
.task.active {
    background: #1e52b7;
    box-shadow: inset 1px 1px 2px #143a88;
}
.lang {
    padding-right: 20px;
}
.tray {
    display: flex;
    align-items: center;
    gap: 2px;
    padding-right: 13px;
    border-left: 1px solid #0f56b8;
    background: linear-gradient(#3cb8fa 0, #1896ec 3px, #1292e8 22px, #1080cc 30px);
}
.expand {
    margin-left: -9px;
}
.tray .expand svg {
    width: 18px;
    height: 18px;
}
.tray time {
    margin-left: 4px;
}
```
